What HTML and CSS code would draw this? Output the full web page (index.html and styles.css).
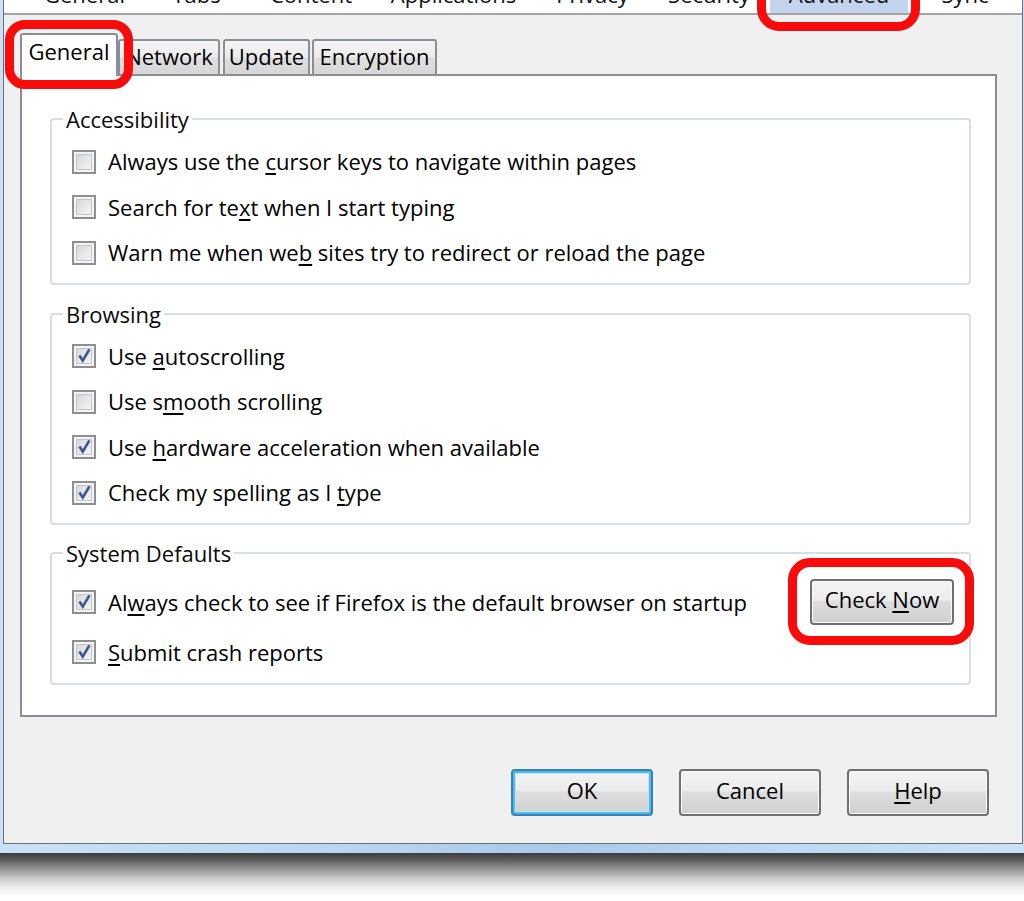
FILE: index.html
```html
<!DOCTYPE html>
<html>
<head>
<meta charset="utf-8">
<title>Options - Advanced</title>
<link rel="stylesheet" href="styles.css">
</head>
<body>
<div class="window">
  <div class="client">
    <div class="toolbar">
      <div class="tb tb-general"><div class="tb-clip"><span>General</span></div></div>
      <div class="tb tb-tabs"><div class="tb-clip"><span>Tabs</span></div></div>
      <div class="tb tb-content"><div class="tb-clip"><span>Content</span></div></div>
      <div class="tb tb-apps"><div class="tb-clip"><span>Applications</span></div></div>
      <div class="tb tb-privacy"><div class="tb-clip"><span>Privacy</span></div></div>
      <div class="tb tb-security"><div class="tb-clip"><span>Security</span></div></div>
      <div class="tb tb-advanced active"><div class="tb-clip"><span>Advanced</span></div><span class="mark mark-adv"></span></div>
      <div class="tb tb-sync"><div class="tb-clip"><span>Sync</span></div></div>
    </div>

    <div class="body">
      <div class="tabs">
        <div class="tab tab-general selected">General<span class="mark mark-tab"></span></div>
        <div class="tab tab-network">Network</div>
        <div class="tab tab-update">Update</div>
        <div class="tab tab-encryption">Encryption</div>
      </div>

      <div class="panel">
        <fieldset class="group">
          <legend>Accessibility</legend>
          <label class="row"><span class="cb"></span><span>Always use the <u>c</u>ursor keys to navigate within pages</span></label>
          <label class="row"><span class="cb"></span><span>Search for te<u>x</u>t when I start typing</span></label>
          <label class="row"><span class="cb"></span><span>Warn me when we<u>b</u> sites try to redirect or reload the page</span></label>
        </fieldset>

        <fieldset class="group group-browse">
          <legend>Browsing</legend>
          <label class="row"><span class="cb checked"><svg viewBox="0 0 24 24"><path d="M6.5 11.5 L10.5 17.5 L18.5 4"/></svg></span><span>Use <u>a</u>utoscrolling</span></label>
          <label class="row"><span class="cb"></span><span>Use s<u>m</u>ooth scrolling</span></label>
          <label class="row"><span class="cb checked"><svg viewBox="0 0 24 24"><path d="M6.5 11.5 L10.5 17.5 L18.5 4"/></svg></span><span>Use <u>h</u>ardware acceleration when available</span></label>
          <label class="row"><span class="cb checked"><svg viewBox="0 0 24 24"><path d="M6.5 11.5 L10.5 17.5 L18.5 4"/></svg></span><span>Check my spelling as I <u>t</u>ype</span></label>
        </fieldset>

        <fieldset class="group group-sys">
          <legend>System Defaults</legend>
          <div class="row row-first">
            <label class="check"><span class="cb checked"><svg viewBox="0 0 24 24"><path d="M6.5 11.5 L10.5 17.5 L18.5 4"/></svg></span><span>Al<u>w</u>ays check to see if Firefox is the default browser on startup</span></label>
            <span class="btn-wrap"><button class="btn btn-check">Check <u>N</u>ow</button><span class="mark mark-btn"></span></span>
          </div>
          <label class="row row-second"><span class="cb checked"><svg viewBox="0 0 24 24"><path d="M6.5 11.5 L10.5 17.5 L18.5 4"/></svg></span><span><u>S</u>ubmit crash reports</span></label>
        </fieldset>
      </div>

      <div class="footer">
        <button class="btn btn-default">OK</button>
        <button class="btn">Cancel</button>
        <button class="btn"><u>H</u>elp</button>
      </div>
    </div>
  </div>
</div>
<div class="shadow"></div>
</body>
</html>
```

FILE: styles.css
```css
* { box-sizing: border-box; }

html, body {
  margin: 0;
  padding: 0;
  background: #ffffff;
}

body {
  width: 1024px;
  height: 901px;
  overflow: hidden;
  font-family: "Open Sans", "Noto Sans", sans-serif;
  font-size: 22px;
  color: #000;
}

u {
  text-decoration-thickness: 2px;
  text-underline-offset: 3px;
}

/* window frame */
.window {
  background: linear-gradient(to right, #c9e0f7 0%, #bcd7f2 30%, #a9c9ea 55%, #bdd8f3 75%, #c9e0f7 100%);
  padding: 0 1px 9px 3px;
}

.client {
  height: 844px;
  background: #f0f0f0;
  border: 1px solid #6b6e72;
  border-top: none;
  display: flex;
  flex-direction: column;
}

/* top toolbar (cut off) */
.toolbar {
  display: flex;
  height: 15px;
  padding-left: 16px;
  background: #ffffff;
  border-bottom: 2px solid #a2a4a7;
  flex: none;
}

.tb {
  position: relative;
  height: 13px;
  flex: none;
}

.tb-clip {
  height: 13px;
  overflow: hidden;
  text-align: center;
}

.tb-clip span {
  display: block;
  line-height: 30px;
  margin-top: -21px;
  color: #111;
}

.tb-general { width: 129px; }
.tb-tabs { width: 95px; }
.tb-content { width: 134px; }
.tb-apps { width: 151px; }
.tb-privacy { width: 127px; }
.tb-security { width: 106px; margin-right: 8px; }
.tb-advanced { width: 138px; }
.tb-sync { width: 114px; }

.tb.active .tb-clip {
  background: #c3d5ee;
}

/* red annotation outlines */
.mark {
  position: absolute;
  border: 9px solid #f80b0b;
  border-radius: 22px;
  pointer-events: none;
  z-index: 5;
}

.mark-adv { left: -13px; right: -12px; top: -30px; bottom: -18px; }
.mark-tab { left: -17px; right: -17px; top: -15px; bottom: -13px; border-radius: 20px; }
.mark-btn { left: -22px; right: -20px; top: -21px; bottom: -19px; }

/* body */
.body {
  flex: 1;
  padding: 18px 25px 27px 16px;
  display: flex;
  flex-direction: column;
}

.tabs {
  display: flex;
  align-items: flex-end;
  height: 43px;
  margin-bottom: -2px;
  position: relative;
  z-index: 2;
  flex: none;
}

.tab {
  height: 35px;
  margin-bottom: 2px;
  padding-bottom: 3px;
  border: 2px solid #8b8e96;
  border-bottom: none;
  border-radius: 3px 3px 0 0;
  background: linear-gradient(to bottom, #f4f4f4 0%, #ececec 48%, #dfdfdf 52%, #d6d6d6 100%);
  display: flex;
  align-items: center;
  justify-content: center;
  white-space: nowrap;
  line-height: 30px;
}

.tab.selected {
  position: relative;
  height: 43px;
  margin-bottom: 0;
  background: #ffffff;
  padding-bottom: 9px;
}

.tab-general { width: 98px; }
.tab-network { width: 102px; }
.tab-update { width: 87px; margin-left: 3px; }
.tab-encryption { width: 125px; margin-left: 2px; }

.panel {
  height: 643px;
  flex: none;
  background: #ffffff;
  border: 2px solid #8b8e96;
  padding: 28px 24px 30px 28px;
}

.group {
  margin: 0;
  padding: 5px 15px 7px 0;
  border: 2px solid #d6dfe6;
  border-radius: 4px;
  min-width: 0;
}

.group legend {
  margin-left: 11px;
  padding: 0 3px;
  line-height: 30px;
  color: #0a0a0a;
}

.group-browse { margin-top: 14px; }
.group-sys { margin-top: 13px; padding-top: 8.5px; }

.row {
  display: flex;
  align-items: center;
  height: 45.5px;
  padding-left: 20px;
  line-height: 30px;
  white-space: nowrap;
}

.row > span:last-child,
.check > span:last-child {
  padding-bottom: 1px;
}

.row-first { height: 52px; }
.row-second { height: 48px; }

.check {
  display: flex;
  align-items: center;
}

.cb {
  width: 24px;
  height: 24px;
  flex: none;
  margin-right: 12px;
  border: 2px solid #8e8f91;
  background: linear-gradient(135deg, #cfd1d5 0%, #e6e7e9 50%, #f8f8f8 100%);
  box-shadow: inset 0 0 0 2px #f4f4f4, inset 0 0 0 3px #c3c6cb;
  display: flex;
  align-items: center;
  justify-content: center;
}

.cb svg {
  width: 20px;
  height: 20px;
  overflow: visible;
}

.cb svg path {
  fill: none;
  stroke: #3f5791;
  stroke-width: 3.2;
  stroke-linejoin: miter;
}

.btn-wrap {
  position: relative;
  margin-left: auto;
  display: flex;
}

.btn {
  font: inherit;
  font-size: 22px;
  color: #000;
  line-height: 30px;
  padding: 0 0 5px 0;
  border: 2px solid #707070;
  border-radius: 4px;
  background: linear-gradient(to bottom, #f3f3f3 0%, #ececec 45%, #dddddd 50%, #d0d0d0 100%);
  box-shadow: inset 0 0 0 1px #fbfbfb;
  cursor: default;
}

.btn-check {
  width: 144px;
  height: 46px;
}

.footer {
  margin-top: 52px;
  display: flex;
  justify-content: flex-end;
  gap: 26px;
  padding-right: 8px;
  flex: none;
}

.footer .btn {
  width: 142px;
  height: 47px;
}

.btn-default {
  border-color: #3c7fb1;
  box-shadow: inset 0 0 0 2px #48bdf0, inset 0 0 0 3px #bfe6f8;
}

/* drop shadow under window */
.shadow {
  height: 48px;
  background: linear-gradient(to bottom, #3c3c3c 0px, #575757 6px, #8e8e8e 15px, #c9c9c9 25px, #ececec 34px, #ffffff 44px);
}
```
